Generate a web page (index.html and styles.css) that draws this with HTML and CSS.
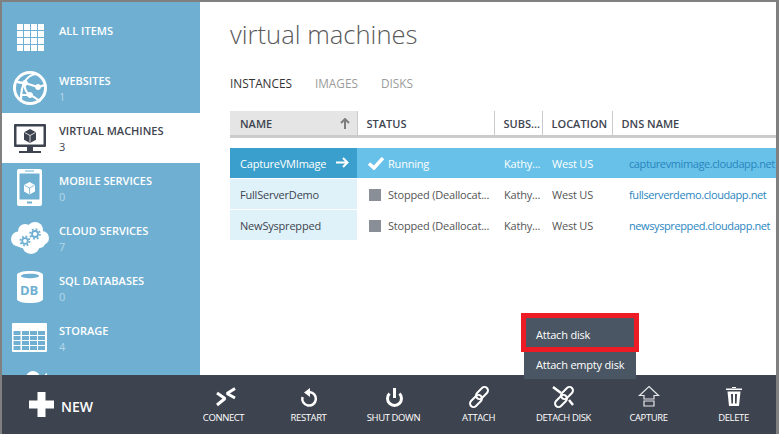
FILE: index.html
```html
<!DOCTYPE html>
<html lang="en">
<head>
    <meta charset="UTF-8">
    <title>Virtual Machines</title>
    <link rel="stylesheet" href="styles.css">
</head>
<body>
<div class="frame">
    <div class="top">
        <nav class="sidebar">
            <a class="nav-item">
                <span class="nav-icon">
                    <svg width="40" height="40" viewBox="0 0 40 40" fill="#fff"><path d="M6 7h6v6H6zM13 7h6v6h-6zM20 7h6v6h-6zM27 7h6v6h-6zM6 14h6v6H6zM13 14h6v6h-6zM20 14h6v6h-6zM27 14h6v6h-6zM6 21h6v6H6zM13 21h6v6h-6zM20 21h6v6h-6zM27 21h6v6h-6zM6 28h6v6H6zM13 28h6v6h-6zM20 28h6v6h-6zM27 28h6v6h-6z"/></svg>
                </span>
                <span class="nav-text"><b>ALL ITEMS</b></span>
            </a>
            <a class="nav-item">
                <span class="nav-icon">
                    <svg width="40" height="40" viewBox="0 0 40 40" fill="none" stroke="#fff"><circle cx="19" cy="21" r="15.500" stroke-width="3"/><path d="M25 7C17 8 10 15 10 33M5 14c3 2 6 2 9 2l13 4 7-2M14 16c-1 5 1 10 5 12 4 2 8 4 10 7M19 28l-10 0" stroke-width="2.200"/><circle cx="14" cy="16" r="2.500" fill="#fff"/><circle cx="27" cy="20" r="2.500" fill="#fff"/><circle cx="19" cy="28" r="2.500" fill="#fff"/></svg>
                </span>
                <span class="nav-text"><b>WEBSITES</b><i>1</i></span>
            </a>
            <a class="nav-item active">
                <span class="nav-icon">
                    <svg width="40" height="40" viewBox="0 0 40 40" fill="#3e444f"><path fill-rule="evenodd" d="M4 7h30a1 1 0 0 1 1 1v21a1 1 0 0 1-1 1H4a1 1 0 0 1-1-1V8a1 1 0 0 1 1-1zM5.500 9.500v18h27v-18z"/><path d="M16 30h6v4h-6zM8 34h22v2H8z"/><path d="M19 12l6 3.300v7.400L19 26l-6-3.300v-7.400z"/><path d="M13.500 15.500l5.500 3 5.500-3M19 18.500v7" fill="none" stroke="#fff" stroke-width=".8"/></svg>
                </span>
                <span class="nav-text"><b>VIRTUAL MACHINES</b><i>3</i></span>
            </a>
            <a class="nav-item">
                <span class="nav-icon">
                    <svg width="40" height="40" viewBox="0 0 40 40" fill="#fff"><path fill-rule="evenodd" d="M8 2h21a2 2 0 0 1 2 2v33a2 2 0 0 1-2 2H8a2 2 0 0 1-2-2V4a2 2 0 0 1 2-2zM8.500 6.500v26h20v-26zM14 3.500v1h9v-1zM16 34.500v2h5v-2z"/><path d="M18.500 15l5.500 3v6.500L18.500 27.500 13 24.500V18z"/><path d="M13.500 18.300l5 2.700 5-2.700M18.500 21v6" fill="none" stroke="#6fb0d2" stroke-width=".8"/></svg>
                </span>
                <span class="nav-text"><b>MOBILE SERVICES</b><i>0</i></span>
            </a>
            <a class="nav-item">
                <span class="nav-icon">
                    <svg width="40" height="40" viewBox="0 0 40 40" fill="#fff"><circle cx="7.500" cy="22" r="7.500"/><circle cx="14" cy="14" r="7"/><circle cx="24" cy="13" r="8"/><circle cx="31" cy="21" r="7"/><circle cx="20" cy="28" r="9"/><circle cx="11" cy="26" r="5"/><circle cx="29" cy="26" r="5"/><g fill="none" stroke="#6fb0d2"><circle cx="14" cy="24" r="2.800" stroke-width="1.800"/><circle cx="14" cy="24" r="4.500" stroke-width="2" stroke-dasharray="1.700 1.830"/><circle cx="24" cy="17" r="3" stroke-width="1.800"/><circle cx="24" cy="17" r="4.800" stroke-width="2" stroke-dasharray="1.800 1.970"/></g></svg>
                </span>
                <span class="nav-text"><b>CLOUD SERVICES</b><i>7</i></span>
            </a>
            <a class="nav-item">
                <span class="nav-icon">
                    <svg width="40" height="40" viewBox="0 0 40 40" fill="#fff"><path fill-rule="evenodd" d="M6 8c0-2.500 6-4 13-4s13 1.500 13 4v24c0 2.500-6 4-13 4S6 34.500 6 32zM10 9c0 1.300 4 2.200 9 2.200S28 10.300 28 9 24 6.800 19 6.800 10 7.700 10 9z"/></svg>
                    <span class="db-label">DB</span>
                </span>
                <span class="nav-text"><b>SQL DATABASES</b><i>0</i></span>
            </a>
            <a class="nav-item">
                <span class="nav-icon">
                    <svg width="40" height="40" viewBox="0 0 40 40" fill="#fff"><path fill-rule="evenodd" d="M2 6h33a1 1 0 0 1 1 1v27a1 1 0 0 1-1 1H2a1 1 0 0 1-1-1V7a1 1 0 0 1 1-1zM2.500 14v4h7v-4zM11 14v4h7v-4zM19 14v4h7v-4zM27 14v4h7v-4zM2.500 19v4h7v-4zM11 19v4h7v-4zM19 19v4h7v-4zM27 19v4h7v-4zM2.500 24v4h7v-4zM11 24v4h7v-4zM19 24v4h7v-4zM27 24v4h7v-4zM2.500 29v4h7v-4zM11 29v4h7v-4zM19 29v4h7v-4zM27 29v4h7v-4z"/></svg>
                </span>
                <span class="nav-text"><b>STORAGE</b><i>4</i></span>
            </a>
            <a class="nav-item">
                <span class="nav-icon">
                    <svg width="40" height="40" viewBox="0 0 40 40" fill="#fff"><circle cx="22" cy="11" r="7"/><path d="M36 6l-2 1v5h2z"/></svg>
                </span>
            </a>
        </nav>
        <main class="content">
            <h1>virtual machines</h1>
            <div class="tabs">
                <a class="tab current">INSTANCES</a>
                <a class="tab">IMAGES</a>
                <a class="tab">DISKS</a>
            </div>
            <table class="grid">
                <colgroup>
                    <col class="col-name"><col class="col-status"><col class="col-subs"><col class="col-loc"><col class="col-dns">
                </colgroup>
                <thead>
                    <tr>
                        <th class="sorted">NAME
                            <svg class="sort-arrow" width="10" height="11" viewBox="0 0 10 11" fill="none" stroke="#7d7d7d" stroke-width="2"><path d="M1 5l4-4 4 4M5 1v10"/></svg>
                        </th>
                        <th>STATUS</th>
                        <th>SUBS...</th>
                        <th>LOCATION</th>
                        <th>DNS NAME</th>
                    </tr>
                </thead>
                <tbody>
                    <tr class="gap"><td colspan="5"></td></tr>
                    <tr class="selected">
                        <td class="name">CaptureVMImage
                            <svg class="go-arrow" width="13" height="11" viewBox="0 0 13 11" fill="none" stroke="#fff" stroke-width="2"><path d="M0 5.500h11M7 1l4.500 4.500L7 10"/></svg>
                        </td>
                        <td class="status">
                            <svg class="status-icon" width="16" height="13" viewBox="0 0 16 13" fill="none" stroke="#fff" stroke-width="3.500"><path d="M1 6.500l5 4.500 9-10"/></svg>Running
                        </td>
                        <td>Kathy...</td>
                        <td>West US</td>
                        <td><a class="dns">capturevmimage.cloudapp.net</a></td>
                    </tr>
                    <tr>
                        <td class="name">FullServerDemo</td>
                        <td class="status"><span class="stopped"></span>Stopped (Deallocat...</td>
                        <td>Kathy...</td>
                        <td>West US</td>
                        <td><a class="dns">fullserverdemo.cloudapp.net</a></td>
                    </tr>
                    <tr>
                        <td class="name">NewSysprepped</td>
                        <td class="status"><span class="stopped"></span>Stopped (Deallocat...</td>
                        <td>Kathy...</td>
                        <td>West US</td>
                        <td><a class="dns">newsysprepped.cloudapp.net</a></td>
                    </tr>
                </tbody>
            </table>
        </main>
    </div>
    <footer class="bar">
        <a class="new">
            <svg width="25" height="25" viewBox="0 0 25 25" fill="#fff"><path d="M8.500 0h8v8.500H25v8h-8.500V25h-8v-8.500H0v-8h8.500z"/></svg>
            <span class="new-label">NEW</span>
        </a>
        <div class="actions">
            <a class="action">
                <svg width="24" height="24" viewBox="0 0 24 24" fill="none" stroke="#fff" stroke-width="3" stroke-linejoin="bevel"><path d="M5 8l8 5.500L5 20M23 3.500l-8 5 8 4.500"/></svg>
                CONNECT
            </a>
            <a class="action">
                <svg width="24" height="24" viewBox="0 0 24 24" fill="none" stroke="#fff" stroke-width="2.500"><path d="M12 7a6.800 6.800 0 1 1-6.500 5"/><path d="M13 3v9L7 7.500z" fill="#fff" stroke="none"/></svg>
                RESTART
            </a>
            <a class="action">
                <svg width="24" height="24" viewBox="0 0 24 24" fill="none" stroke="#fff" stroke-width="3"><path d="M7.500 8.500a7 7 0 1 0 10 0"/><path d="M12.500 3v10"/></svg>
                SHUT DOWN
            </a>
            <a class="action">
                <svg width="24" height="24" viewBox="0 0 24 24" fill="none" stroke="#fff" stroke-width="2"><rect x="2" y="12.500" width="14" height="7" rx="3.500" transform="rotate(-45 9 16)"/><rect x="8" y="4.500" width="14" height="7" rx="3.500" transform="rotate(-45 15 8)"/></svg>
                ATTACH
            </a>
            <a class="action">
                <svg width="24" height="24" viewBox="0 0 24 24" fill="none" stroke="#fff" stroke-width="2"><rect x="2" y="12.500" width="14" height="7" rx="3.500" transform="rotate(-45 9 16)"/><rect x="8" y="4.500" width="14" height="7" rx="3.500" transform="rotate(-45 15 8)"/><path d="M1 2l8 6M17 15l4 5" stroke-width="2.500"/></svg>
                DETACH DISK
            </a>
            <a class="action">
                <svg width="24" height="24" viewBox="0 0 24 24" fill="none" stroke="#e4e6e8" stroke-width="1.200"><path d="M12 1.500l9.500 9H17V14H7v-3.500H2.500z"/><path d="M7 16h10v5H7z"/></svg>
                CAPTURE
            </a>
            <a class="action">
                <svg width="24" height="24" viewBox="0 0 24 24" fill="#fff"><path d="M10 2h4v1h-4zM4 3.500h16V5H4z"/><path fill-rule="evenodd" d="M5.500 6.500h13L17 21H7zM9 9l.4 9.500H11V9zM13 9v9.500h1.600L15 9z"/></svg>
                DELETE
            </a>
        </div>
    </footer>
    <div class="menu">
        <a class="menu-item marked">Attach disk</a>
        <a class="menu-item">Attach empty disk</a>
    </div>
</div>
</body>
</html>
```

FILE: styles.css
```css
html, body {
    margin: 0;
    height: 100%;
    overflow: hidden;
}
body {
    font-family: "Open Sans", "Noto Sans", sans-serif;
    color: #3e444f;
    background: #fff;
}
.frame {
    box-sizing: border-box;
    height: 434px;
    border: solid #808080;
    border-width: 2px 3px 0 2px;
    display: flex;
    flex-direction: column;
    position: relative;
}
.top {
    flex: 1;
    min-height: 0;
    display: flex;
}

/* sidebar */
.sidebar {
    width: 198px;
    flex: none;
    box-sizing: border-box;
    padding-top: 11px;
    background: #6fb0d2;
    overflow: hidden;
}
.nav-item {
    height: 50px;
    display: flex;
    color: #fff;
}
.nav-item.active {
    background: #fff;
    color: #3e444f;
}
.nav-icon {
    width: 40px;
    height: 40px;
    margin: 4px 0 0 9px;
    position: relative;
    flex: none;
}
.nav-icon svg {
    display: block;
}
.db-label {
    position: absolute;
    left: 9px;
    top: 17px;
    font-size: 13px;
    line-height: 13px;
    font-weight: 700;
    color: #6fb0d2;
}
.nav-text {
    margin: 10px 0 0 8px;
    font-size: 11px;
    line-height: 15px;
}
.nav-text b {
    display: block;
    font-weight: 600;
}
.nav-text i {
    display: block;
    font-style: normal;
    line-height: 18px;
    color: #b5d6e8;
}
.active .nav-text i {
    color: #3e444f;
}

/* content */
.content {
    flex: 1;
    min-width: 0;
    overflow: hidden;
    padding-left: 30px;
}
h1 {
    margin: 14px 0 0;
    font-size: 25.6px;
    line-height: 38px;
    font-weight: 300;
    color: #5a5a5a;
}
.tabs {
    display: flex;
    gap: 23px;
    margin-top: 20px;
    font-size: 11.800px;
    line-height: 18px;
}
.tab {
    color: #9b9b9b;
}
.tab.current {
    color: #333;
}
.grid {
    width: 546px;
    table-layout: fixed;
    border-collapse: collapse;
    margin-top: 19px;
    font-size: 11px;
}
.col-name { width: 127px; }
.col-status { width: 137px; }
.col-subs { width: 48px; }
.col-loc { width: 70px; }
.col-dns { width: 164px; }
th {
    height: 24px;
    padding: 0 0 0 10px;
    text-align: left;
    font-weight: 600;
    color: #3e444f;
    border-bottom: 3px solid #cbcbcb;
    position: relative;
    white-space: nowrap;
}
th + th {
    border-left: 1px solid #cbcbcb;
    padding-left: 9px;
}
th.sorted {
    background: #e5e5e5;
}
.sort-arrow {
    position: absolute;
    right: 7px;
    top: 7px;
}
td {
    height: 30px;
    padding: 0 0 0 10px;
    white-space: nowrap;
    color: #555;
    letter-spacing: -0.2px;
    border-bottom: 1px solid #fff;
}
.gap td {
    height: 9px;
    padding: 0;
}
td.name {
    background: #dff2fa;
    color: #3e444f;
    position: relative;
}
td.status {
    padding-left: 11px;
}
.selected td {
    background: #67c1e8;
    color: #fff;
}
.selected td.name {
    background: #3a9fcc;
}
.go-arrow {
    position: absolute;
    right: 8px;
    top: 9px;
}
.status-icon {
    margin-right: 4px;
    vertical-align: -2px;
}
.stopped {
    display: inline-block;
    width: 12px;
    height: 12px;
    margin: 0 7px 0 1px;
    vertical-align: -2px;
    background: #8a8e96;
}
.dns {
    color: #2a86bf;
    margin-left: 7px;
    letter-spacing: -0.4px;
}

/* attach menu, hangs over the bar */
.menu {
    position: absolute;
    left: 522px;
    top: 314px;
    width: 112px;
    font-size: 11px;
    letter-spacing: -0.2px;
    color: #fff;
    background: #4a5663;
}
.menu-item {
    display: block;
    height: 27px;
    line-height: 25px;
    padding-left: 12px;
    white-space: nowrap;
}
.menu-item.marked {
    box-sizing: border-box;
    height: 39px;
    line-height: 33px;
    margin: -3px -3px 0;
    padding-left: 10px;
    border: 5px solid #ed1c24;
}

/* bottom bar */
.bar {
    flex: none;
    height: 59px;
    display: flex;
    background: #3e444f;
    color: #fff;
}
.new {
    width: 179px;
    flex: none;
    box-sizing: border-box;
    padding-left: 27px;
    display: flex;
    align-items: center;
    gap: 7px;
    font-size: 14px;
    font-weight: 600;
}
.new-label {
    margin-top: 4px;
}
.actions {
    display: flex;
}
.action {
    width: 85px;
    height: 59px;
    box-sizing: border-box;
    padding-top: 10px;
    display: flex;
    flex-direction: column;
    align-items: center;
    font-size: 9.500px;
    letter-spacing: -0.4px;
    line-height: 14px;
    white-space: nowrap;
}
.action svg {
    margin-bottom: 2px;
    flex: none;
}
```
